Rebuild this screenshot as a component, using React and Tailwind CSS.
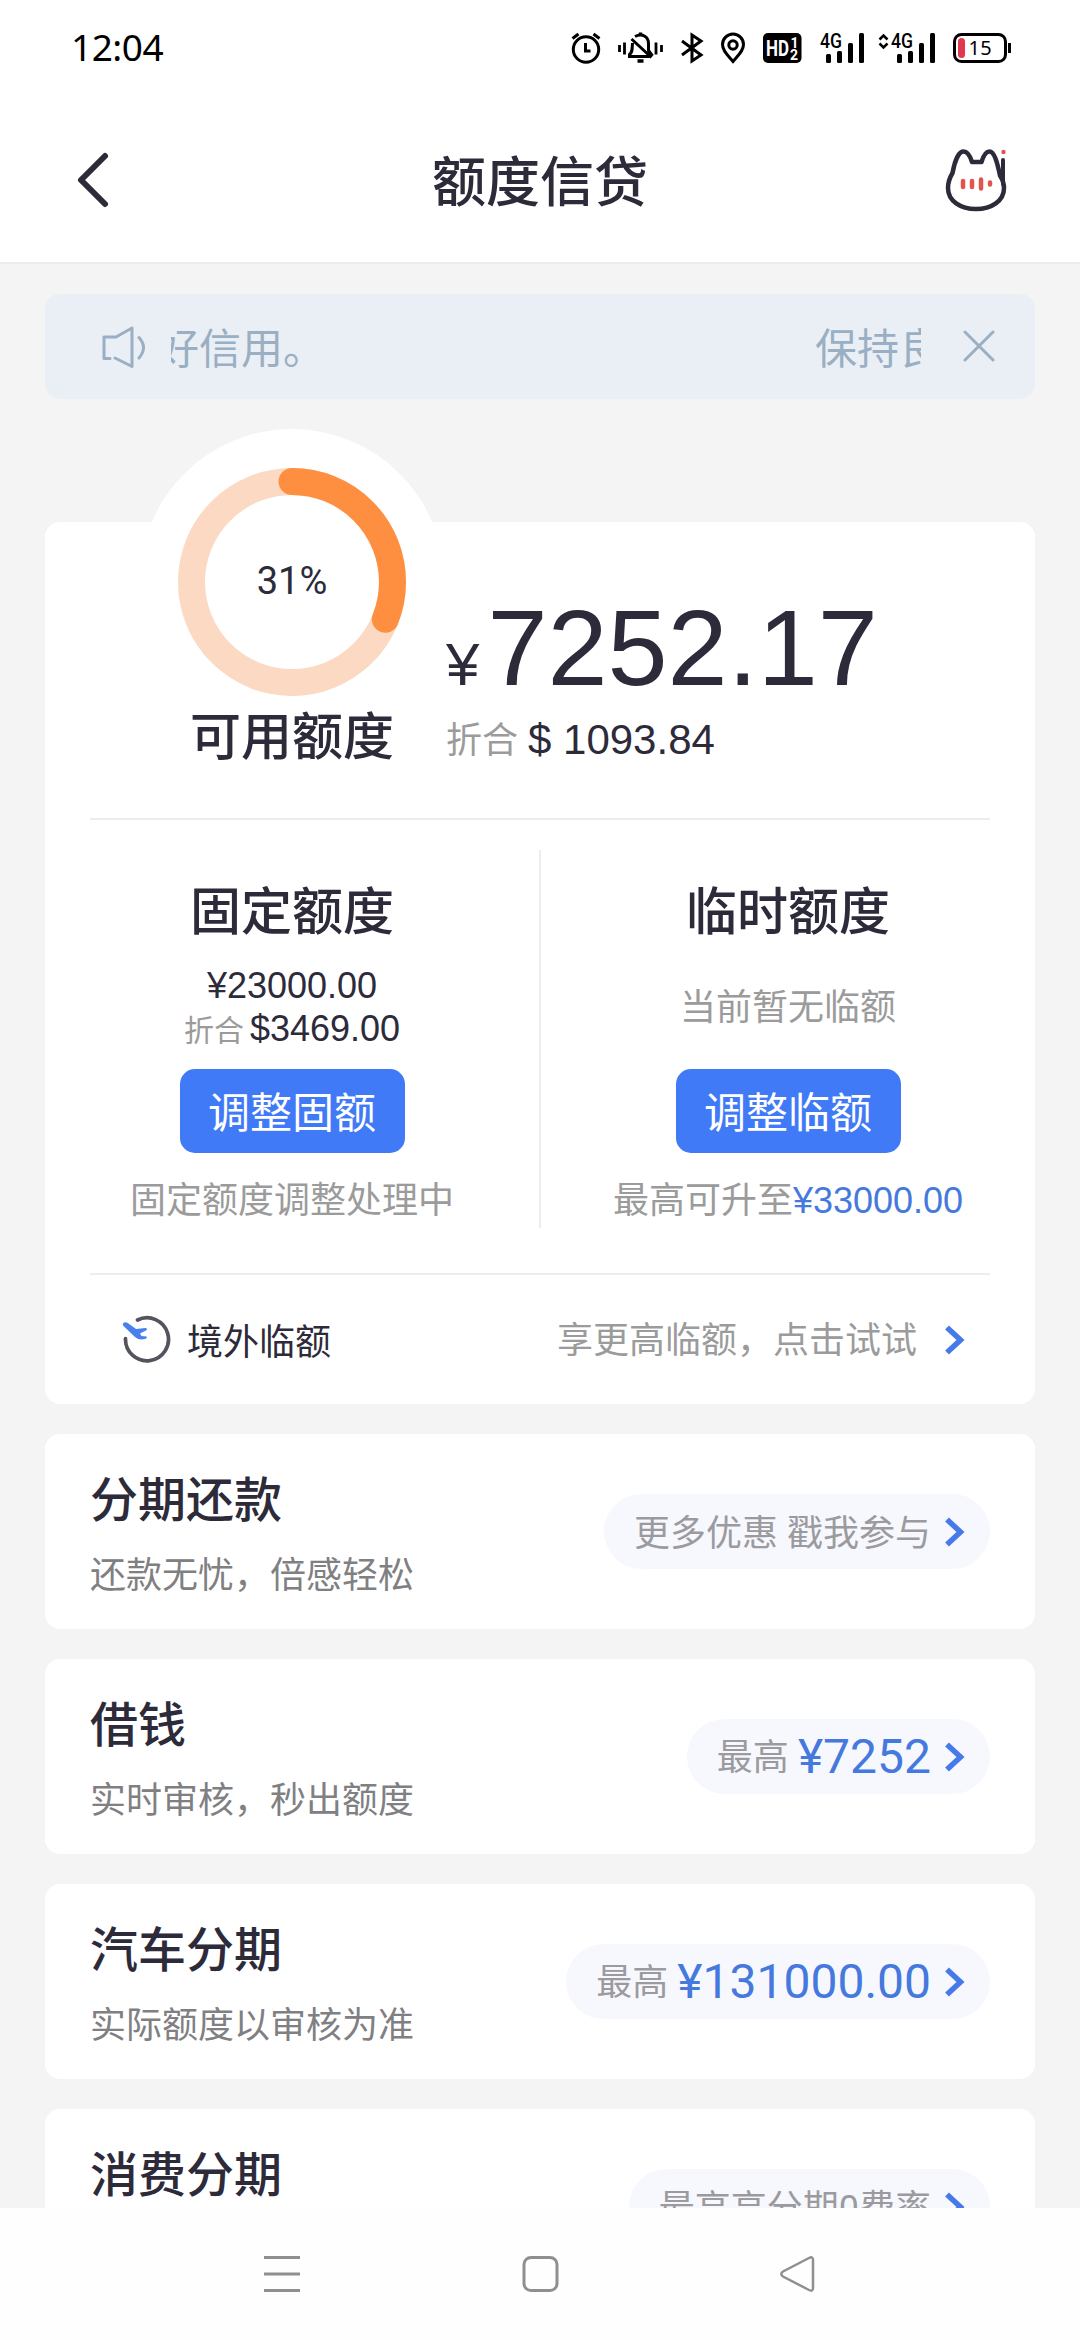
import React from "react";

const products = [
  { title: "分期还款", desc: "还款无忧，倍感轻松", label: "更多优惠 戳我参与" },
  { title: "借钱", desc: "实时审核，秒出额度", label: "最高", amount: "¥7252" },
  { title: "汽车分期", desc: "实际额度以审核为准", label: "最高", amount: "¥131000.00" },
  { title: "消费分期", label: "最高高分期0费率" },
];

function SignalBars() {
  return (
    <g fill="#000">
      <rect x="6" y="22" width="5" height="9" rx="1.5" />
      <rect x="17" y="19" width="5" height="12" rx="1.5" />
      <rect x="28" y="11" width="5" height="20" rx="1.5" />
      <rect x="39" y="1" width="5" height="30" rx="1.5" />
    </g>
  );
}

function StatusIcons() {
  return (
    <svg className="h-[60px] w-[480px]" viewBox="560 19 480 60" fill="none" stroke="#000">
      {/* alarm */}
      <circle cx="586" cy="49.5" r="12.7" strokeWidth="3" />
      <path d="M585.5 43v8h5M572.5 38.5l6-4.5M599.5 38.5l-6-4.5" strokeWidth="3" />
      {/* muted bell */}
      <path d="M619.5 45v7M624.5 42.5v12M656 42.5v12M661.5 45v7" strokeWidth="2.8" />
      <path d="M635 36.5c8-4 13.5 1 13.5 7v7l4 5.5M632.5 43c-.5 7 0 9-3 11.5v2h20M631.5 39l20 18.5" strokeWidth="3" />
      <path d="M637.5 61h6M640.5 32.5v3.5" strokeWidth="3.5" />
      {/* bluetooth */}
      <path d="M682 41l19 14-9 6V35l9 6-19 14" strokeWidth="3" />
      {/* location */}
      <path d="M733 61.5c-5-6-10.5-10.5-10.5-17a10.500 10.500 0 0 1 21 0c0 6.5-5.5 11-10.5 17z" strokeWidth="3" />
      <circle cx="733" cy="45" r="4.2" strokeWidth="3" />
      {/* hd badge */}
      <rect x="763" y="33" width="38.5" height="30" rx="5" fill="#000" stroke="none" />
      <g stroke="none" fill="#fff" fontFamily="Roboto, sans-serif" fontWeight="700">
        <text x="766" y="56" fontSize="22" textLength="23" lengthAdjust="spacingAndGlyphs">HD</text>
        <text x="790.5" y="47.5" fontSize="14">1</text>
        <text x="790" y="59.5" fontSize="14">2</text>
      </g>
      {/* sim 1 */}
      <g transform="translate(820 32)" stroke="none"><SignalBars /></g>
      {/* sim 2 */}
      <g transform="translate(891 32)" stroke="none"><SignalBars /></g>
      <g stroke="none" fill="#000" fontFamily="Roboto, sans-serif" fontWeight="500" fontSize="20">
        <text x="820" y="48" textLength="22" lengthAdjust="spacingAndGlyphs">4G</text>
        <text x="891" y="48" textLength="22" lengthAdjust="spacingAndGlyphs">4G</text>
      </g>
      <path d="M879.5 39.5l4-4 4 4M879.5 43.5l4 4 4-4" strokeWidth="2.5" />
      {/* battery */}
      <rect x="954.5" y="34.5" width="51" height="27" rx="7" strokeWidth="3" />
      <rect x="958" y="38" width="7" height="20" rx="3.5" fill="#e0384c" stroke="none" />
      <path d="M1009.5 43v10" strokeWidth="3" />
      <text x="968.5" y="55" fontSize="20" fill="#000" stroke="none" letterSpacing="0.3" fontFamily="Noto Sans, sans-serif">15</text>
    </svg>
  );
}

function CatIcon() {
  return (
    <svg className="h-[66px] w-[64px]" viewBox="942 147 64 66" fill="none" strokeLinecap="round" strokeLinejoin="round">
      <path
        d="M951.5 173c2-11 6-21.5 11-21.5 4 0 6.500 4 8.500 10.500h9.500c2-6.500 4-10.500 8-10.500 5 0 8 12 10.500 24 2.500 4 4 8 4 12.500 0 13-12.500 21-28 21s-28-8-28-21c0-5 1.500-10 4.500-15z"
        stroke="#2d2b3a"
        strokeWidth="4.5"
      />
      <path d="M1002 160v24" stroke="#2d2b3a" strokeWidth="4" />
      <circle cx="1002.5" cy="152" r="2.2" fill="#e2544c" />
      <path d="M962 181v6M971 181v6M980 179.5v9M989 182.5v2" stroke="#e2544c" strokeWidth="4.5" />
    </svg>
  );
}

function PlaneIcon() {
  return (
    <svg className="h-[50px] w-[50px]" viewBox="122 1315 50 50" fill="none">
      <path d="M137.5 1320a21.500 21.500 0 1 1-12 18.500" stroke="#55545e" strokeWidth="3.7" strokeLinecap="round" />
      <path
        d="M123.5 1323c1.500-1.500 3.500-.5 5 .5l7.500 5.500 9.500-1c2 .5 2 1.500.5 2.500l-6 3 1.500 2.500 5 .5c1 1 0 2-1.500 2.500-4 1-7 .5-10-2l-11-10.500c-1.500-1.500-1.500-2.500-.5-3.500z"
        fill="#4a80ee"
      />
    </svg>
  );
}

function Arrow() {
  return (
    <svg className="h-[30px] w-[20px] shrink-0" viewBox="0 0 20 30" fill="none" stroke="#4679ea" strokeWidth="5.5">
      <path d="M2 2.5L15.5 15 2 27.5" />
    </svg>
  );
}

function QuotaRing({ percent }) {
  const r = 100.5;
  const length = 2 * Math.PI * r;

  return (
    <div className="relative -mt-[93px] flex h-[304px] w-[304px] shrink-0 items-center justify-center rounded-full bg-white pt-[2px]">
      <svg className="h-[228px] w-[228px] -rotate-90" viewBox="0 0 228 228" fill="none" strokeWidth="27">
        <circle cx="114" cy="114" r={r} stroke="#fbd9c3" />
        <circle
          cx="114"
          cy="114"
          r={r}
          stroke="#ff8f40"
          strokeLinecap="round"
          strokeDasharray={`${(length * percent) / 100} ${length}`}
        />
      </svg>
      <span className="absolute inset-0 flex items-center justify-center font-['Roboto',sans-serif] text-[38px]">
        {percent}%
      </span>
    </div>
  );
}

function ProductCard({ title, desc, label, amount }) {
  return (
    <div className="flex h-[195px] shrink-0 justify-between rounded-[15px] bg-white px-[45px]">
      <div className="pt-[34px]">
        <h3 className="text-[48px] leading-[56px] font-medium">{title}</h3>
        {desc && <p className="mt-[24px] text-[36px] leading-[48px] text-[#808083]">{desc}</p>}
      </div>
      <div className="mt-[60px] flex h-[75px] items-center rounded-full bg-[#f7f8fd] pr-[25px] pl-[30px]">
        <span className={`${amount ? "mt-[2px]" : "mt-[4px]"} font-['Roboto','Noto_Sans_CJK_SC',sans-serif] text-[36px] leading-[48px] text-[#9b9b9f]`}>
          {label}
        </span>
        {amount && (
          <span className="ml-[9px] font-['Roboto',sans-serif] text-[48px] leading-[48px] text-[#4679dd]">{amount}</span>
        )}
        <span className="ml-[14px]"><Arrow /></span>
      </div>
    </div>
  );
}

export default function App() {
  return (
    <div className="flex h-[2340px] w-[1080px] flex-col overflow-hidden bg-[#f4f4f4] font-['Noto_Sans_CJK_SC',sans-serif] text-[#2d2b3a]">
      {/* status bar */}
      <div className="flex h-[98px] shrink-0 items-center justify-between bg-white pl-[71px] pr-[40px]">
        <span className="-mt-[4px] font-['Noto_Sans',sans-serif] text-[37px] leading-[50px] tracking-[-0.5px] text-black">12:04</span>
        <StatusIcons />
      </div>

      {/* title bar */}
      <header className="flex h-[166px] shrink-0 items-center justify-between border-b-2 border-[#ececec] bg-white pr-[73px] pl-[76px]">
        <svg className="h-[60px] w-[61px]" viewBox="76 150 61 60" fill="none" stroke="#2d2b3a" strokeWidth="6" strokeLinecap="round" strokeLinejoin="round">
          <path d="M105 156l-24 24 24 24" />
        </svg>
        <h1 className="-mt-[2px] text-[54px] leading-[80px] font-medium">额度信贷</h1>
        <CatIcon />
      </header>

      <main className="flex min-h-0 flex-1 flex-col overflow-hidden px-[45px] pt-[30px]">
        {/* notice */}
        <div className="flex h-[105px] shrink-0 items-center rounded-[15px] bg-[#e9eff4] pl-[56px] pr-[39px] text-[#9aafc3]">
          <svg className="h-[44px] w-[46px]" viewBox="100 326 46 44" fill="none" stroke="currentColor" strokeWidth="3" strokeLinecap="round" strokeLinejoin="round">
            <path d="M109 359.5h-6V338h12l16-9v38.5l-17-8.500M138 338.5q9 10 0 20.5" />
          </svg>
          <div className="-mt-[2px] ml-[24px] flex w-[750px] justify-between overflow-hidden text-[42px] leading-[60px] whitespace-nowrap">
            <span className="-ml-[14px]">好信用。</span>
            <span className="-mr-[20px]">保持良</span>
          </div>
          <svg className="ml-[41px] h-[34px] w-[34px]" viewBox="0 0 34 34" fill="none" stroke="currentColor" strokeWidth="3" strokeLinecap="round">
            <path d="M3 2l28 28M31 2L3 30" />
          </svg>
        </div>

        {/* quota card */}
        <section className="mt-[123px] h-[882px] shrink-0 rounded-[15px] bg-white px-[45px]">
          <div className="flex h-[298px] border-b-2 border-[#ededed]">
            <div className="ml-[50px] flex w-[304px] flex-col items-center">
              <QuotaRing percent={31} />
              <h2 className="relative -mt-[32px] text-[51px] leading-[64px] font-medium">可用额度</h2>
            </div>
            <div className="ml-[2px] pt-[72px] font-['Liberation_Sans',sans-serif]">
              <div className="flex items-baseline leading-[107px]">
                <span className="text-[60px]">¥</span>
                <span className="ml-[8px] text-[108px]">7252.17</span>
              </div>
              <div className="flex items-baseline leading-[40px]">
                <span className="relative -top-[1px] font-['Noto_Sans_CJK_SC',sans-serif] text-[36px] text-[#9b9b9b]">折合</span>
                <span className="ml-[10px] text-[42px]">$ 1093.84</span>
              </div>
            </div>
          </div>

          <div className="flex h-[455px] items-start border-b-2 border-[#ededed]">
            <div className="flex w-[404px] flex-col items-center pt-[56px]">
              <h2 className="text-[51px] leading-[64px] font-medium">固定额度</h2>
              <p className="mt-[25px] font-['Liberation_Sans',sans-serif] text-[36px] leading-[42px]">¥23000.00</p>
              <p className="flex items-baseline font-['Liberation_Sans',sans-serif] text-[36px] leading-[42px]">
                <span className="mr-[6px] font-['Noto_Sans_CJK_SC',sans-serif] text-[30px] text-[#9b9b9b]">折合</span>
                $3469.00
              </p>
              <button className="mt-[19px] h-[84px] w-[225px] rounded-[15px] bg-[#417af7] pb-[4px] text-[42px] text-white">调整固额</button>
              <p className="mt-[19px] text-[36px] leading-[50px] text-[#9b9b9b]">固定额度调整处理中</p>
            </div>
            <div className="mt-[30px] ml-[45px] h-[378px] w-[2px] bg-[#ededed]" />
            <div className="flex w-[449px] flex-col items-center pt-[56px] pl-[45px]">
              <h2 className="text-[51px] leading-[64px] font-medium">临时额度</h2>
              <p className="mt-[39px] text-[36px] leading-[50px] text-[#9b9b9b]">当前暂无临额</p>
              <button className="mt-[40px] h-[84px] w-[225px] rounded-[15px] bg-[#417af7] pb-[4px] text-[42px] text-white">调整临额</button>
              <p className="mt-[19px] flex items-baseline text-[36px] leading-[50px] whitespace-nowrap text-[#9b9b9b]">
                最高可升至
                <span className="font-['Liberation_Sans',sans-serif] text-[#4679dd]">¥33000.00</span>
              </p>
            </div>
          </div>

          <div className="flex h-[129px] items-center pr-[25px] pl-[32px]">
            <PlaneIcon />
            <span className="-mt-[2px] ml-[15px] text-[36px]">境外临额</span>
            <span className="-mt-[5px] mr-[28px] ml-auto text-[36px] text-[#9b9b9b]">享更高临额，点击试试</span>
            <Arrow />
          </div>
        </section>

        <div className="mt-[30px] flex flex-col gap-[30px]">
          {products.map((item) => (
            <ProductCard key={item.title} {...item} />
          ))}
        </div>
      </main>

      {/* system navigation */}
      <nav className="flex h-[132px] shrink-0 items-center justify-center bg-[#fefefe]">
        <svg className="h-[40px] w-[560px]" viewBox="260 2254 560 40" fill="none" stroke="#8f8f8f" strokeWidth="3">
          <path d="M264 2257.5h36M264 2274h36M264 2290.5h36" />
          <rect x="524" y="2257.5" width="33" height="33" rx="7" />
          <path d="M783 2271.5l26-13.5q4-2 4 2v28q0 4-4 2l-26-13.5q-3.500-2.500 0-5z" strokeWidth="2.5" />
        </svg>
      </nav>
    </div>
  );
}
